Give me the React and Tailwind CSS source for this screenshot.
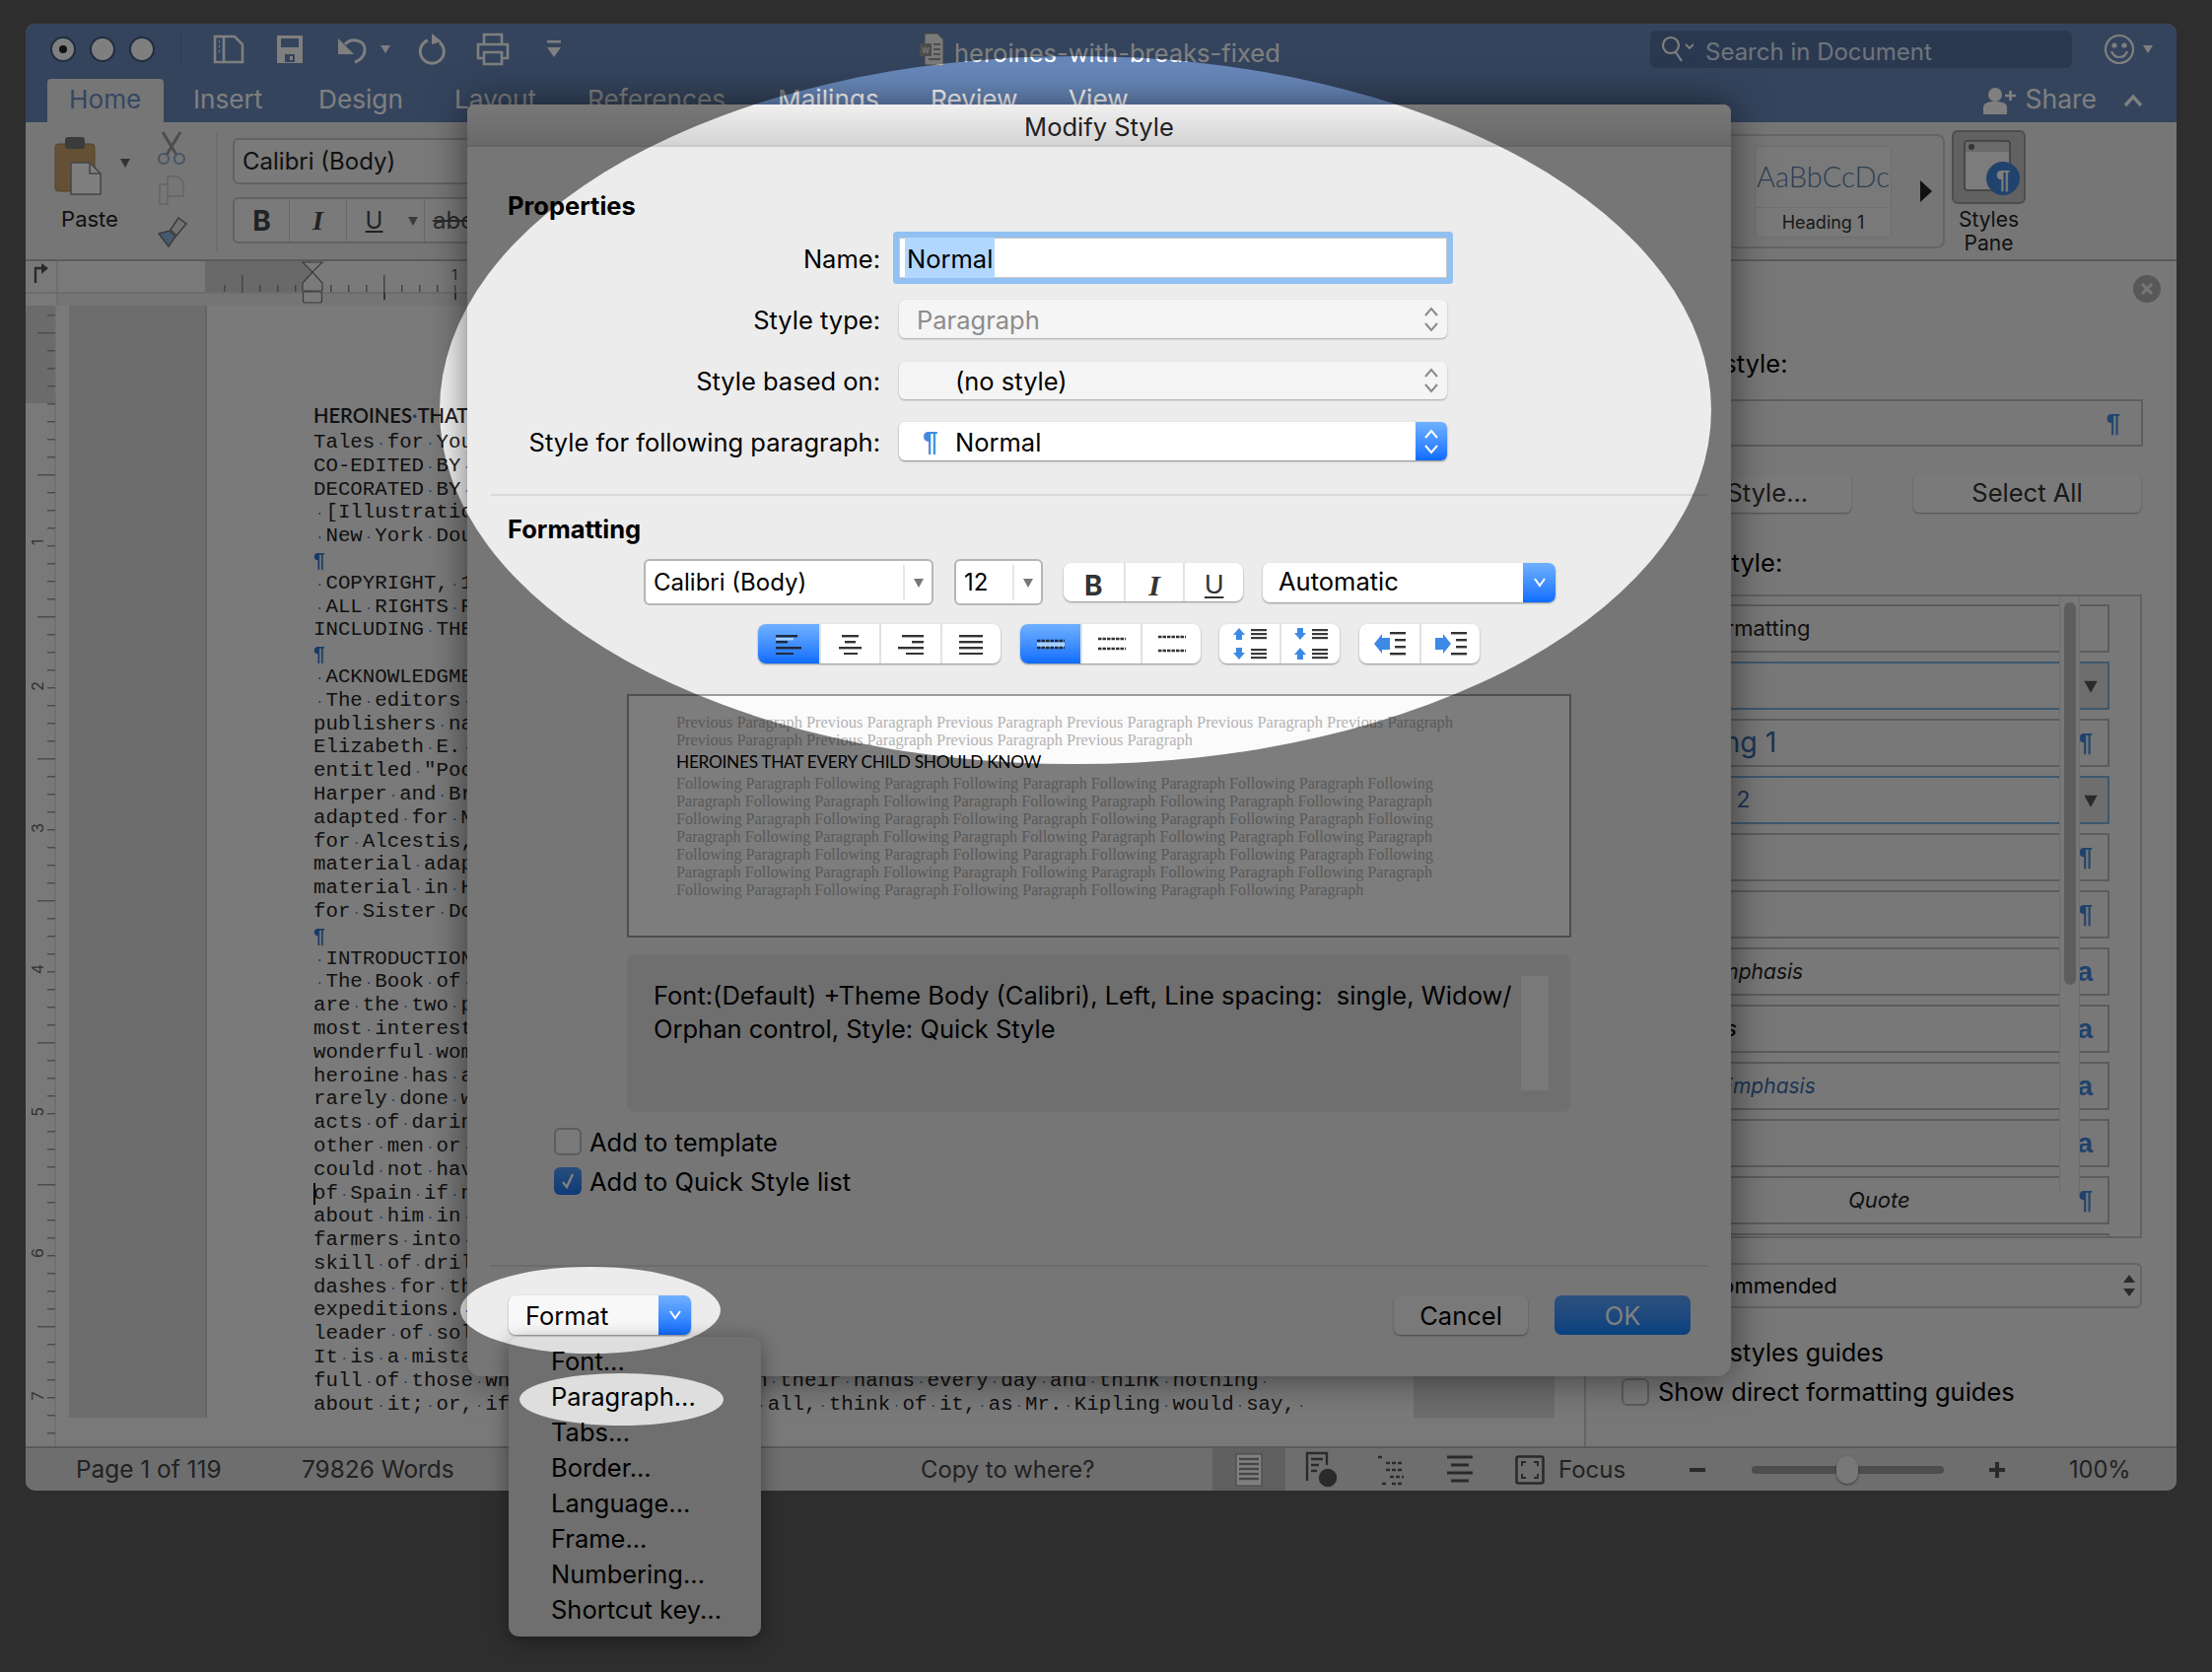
const docLines = [
  "Tales for Young People of the World's Heroines of All Ages",
  "CO-EDITED BY HAMILTON WRIGHT MABIE AND KATE STEPHENS",
  "DECORATED BY BLANCHE OSTERTAG",
  " [Illustration]",
  " New York Doubleday, Page & Company",
  "¶",
  " COPYRIGHT, 1908, BY DOUBLEDAY, PAGE & COMPANY",
  " ALL RIGHTS RESERVED, INCLUDING THAT OF TRANSLATION",
  "INCLUDING THE SCANDINAVIAN",
  "¶",
  " ACKNOWLEDGMENT",
  " The editors and publishers",
  "publishers named below",
  "Elizabeth E. Seelye",
  "entitled \"Pocahontas\"",
  "Harper and Brothers",
  "adapted for Madame",
  "for Alcestis, and",
  "material adapted",
  "material in Hypatia",
  "for Sister Dora",
  "¶",
  " INTRODUCTION",
  " The Book of Heroines",
  "are the two parts",
  "most interesting",
  "wonderful women",
  "heroine has a",
  "rarely done with",
  "acts of daring",
  "other men or women",
  "could not have done",
  "of Spain if not",
  "about him in the",
  "farmers into soldiers",
  "skill of drill",
  "dashes for the enemy",
  "expeditions. He",
  "leader of soldiers",
  "It is a mistake",
  "full of those who hold their lives in their hands every day and think nothing ",
  "about it; or, if they think of it at all, think of it, as Mr. Kipling would say, ",
];

function DocLine({ text, caret }) {
  if (text === "¶") {
    return <div className="h-[23.81px] font-['Liberation_Sans'] font-bold text-[#2f74c8]">¶</div>;
  }
  const parts = text.split(" ");
  return (
    <div className="relative h-[23.81px]">
      {caret && <span className="absolute left-0 top-[1px] h-[22px] w-[2px] bg-black" />}
      {parts.map((p, i) => (
        <span key={i}>
          {i > 0 && <span className="inline-block w-[12.45px] text-center text-[13px] text-[#2f74c8]">·</span>}
          {p}
        </span>
      ))}
    </div>
  );
}

function Chevrons({ color = "#8a8a8a" }) {
  return (
    <svg width="16" height="28" viewBox="0 0 16 28" fill="none" stroke={color} strokeWidth="2">
      <path d="M2 10 L8 3 L14 10" />
      <path d="M2 18 L8 25 L14 18" />
    </svg>
  );
}

function Down({ className, size = 12 }) {
  return (
    <svg className={className} width={size} height={size} viewBox="0 0 12 12" fill="currentColor">
      <path d="M1 2 H11 L6 11 Z" />
    </svg>
  );
}

function BlueDrop({ w }) {
  return (
    <svg width={w} height="12" viewBox="0 0 16 12" fill="none" stroke="#fff" strokeWidth="2">
      <path d="M3 2 L8 9 L13 2" />
    </svg>
  );
}

function Bars({ rows, w = 26, h = 22, color = "#333333", stripe }) {
  return (
    <svg width={w} height={h} viewBox={`0 0 ${w} ${h}`}>
      {rows.map(([x, len, y], i) => (
        <rect key={i} x={x} y={y} width={len} height="2.4" fill={color} />
      ))}
      {stripe && stripe.map(([x, len, y], i) => <rect key={i} x={x} y={y} width={len} height="2.4" fill="#a9d0ff" />)}
    </svg>
  );
}

function Spacing({ top, bottom, color = "#333333", stripe }) {
  return (
    <svg width="30" height="24" viewBox="0 0 30 24">
      {stripe && <rect x="1" y={top + 1.5} width="28" height={bottom - top - 2} fill="#a9d0ff" />}
      <path d={`M1 ${top} H29`} stroke={color} strokeWidth="2.4" strokeDasharray="3.5 1" />
      <path d={`M1 ${bottom} H29`} stroke={color} strokeWidth="2.4" strokeDasharray="3.5 1" />
    </svg>
  );
}

function ParaSp({ flip }) {
  const up = "M7 0 L13 7 H10 V12 H4 V7 H1 Z";
  const dn = "M4 0 H10 V5 H13 L7 12 L1 5 H4 Z";
  return (
    <svg width="36" height="32" viewBox="0 0 36 32">
      <path d={flip ? dn : up} fill="#3d8ae6" />
      <path d={flip ? up : dn} fill="#3d8ae6" transform="translate(0 20)" />
      {[2, 6, 10, 22, 26, 30].map((y) => (
        <rect key={y} x="19" y={y - 1} width="16" height="2.2" fill="#3a3a3a" />
      ))}
    </svg>
  );
}

function Indent({ right }) {
  return (
    <svg width="34" height="26" viewBox="0 0 34 26">
      {right ? (
        <path d="M1 5 H9 V1 L17 11 L9 21 V17 H1 Z" fill="#3d8ae6" transform="translate(0 2)" />
      ) : (
        <path d="M17 5 H9 V1 L1 11 L9 21 V17 H17 Z" fill="#3d8ae6" transform="translate(0 2)" />
      )}
      <rect x="17" y="1" width="16" height="2.4" fill="#333" />
      <rect x="22" y="8" width="11" height="2.4" fill="#333" />
      <rect x="22" y="15" width="11" height="2.4" fill="#333" />
      <rect x="17" y="22" width="16" height="2.4" fill="#333" />
    </svg>
  );
}

function Check({ checked }) {
  return checked ? (
    <span className="flex h-[28px] w-[28px] items-center justify-center rounded-[6px] bg-linear-to-b from-[#4e9bf8] to-[#1d74ee]">
      <svg width="16" height="18" viewBox="0 0 16 18" fill="none" stroke="#fff" strokeWidth="2.4">
        <path d="M3 10 L7 15 L13 2" />
      </svg>
    </span>
  ) : (
    <span className="h-[28px] w-[28px] rounded-[6px] border-2 border-[#b8b8b8] bg-[#f3f3f3]" />
  );
}

function Tab({ className, children }) {
  return <div className={`flex h-[44px] items-center pb-[3px] text-[26.2px] text-white ${className}`}>{children}</div>;
}

function StyleRow({ children, suffix, blue, className = "" }) {
  return (
    <div
      className={`flex h-[49px] w-[488px] shrink-0 items-center justify-between border-2 pl-[10px] ${
        blue ? "border-[#7bb0dd]" : "border-[#b8b8b8]"
      } ${className}`}
    >
      {children}
      {suffix === "drop" && (
        <span className="flex h-full w-[30px] items-center justify-center bg-[#dcdcdc] pr-[4px] text-[#555555]">
          <Down size={16} />
        </span>
      )}
      {suffix === "p" && <span className="mr-[15px] font-['Liberation_Sans'] text-[26px] font-bold text-[#3f86d8]">¶</span>}
      {suffix === "a" && <span className="mr-[15px] font-['Liberation_Sans'] text-[28px] font-bold leading-none text-[#3f86d8]">a</span>}
    </div>
  );
}

function Pilcrow({ className }) {
  return <span className={`font-['Liberation_Sans'] font-bold text-[#3f8be0] ${className}`}>¶</span>;
}

const P6 = "Previous Paragraph Previous Paragraph Previous Paragraph Previous Paragraph Previous Paragraph Previous Paragraph";
const P4 = "Previous Paragraph Previous Paragraph Previous Paragraph Previous Paragraph";
const FA = "Following Paragraph Following Paragraph Following Paragraph Following Paragraph Following Paragraph Following";
const FB = "Paragraph Following Paragraph Following Paragraph Following Paragraph Following Paragraph Following Paragraph";
const FC = "Following Paragraph Following Paragraph Following Paragraph Following Paragraph Following Paragraph";

function Dialog() {
  const seg = "flex items-center justify-center border-l-2 border-[#e2e2e2] first:border-l-0";
  const group = "grid overflow-hidden rounded-[8px] bg-white shadow-[0_1px_2px_rgba(0,0,0,0.4)]";
  const blue = "flex items-center justify-center bg-linear-to-b from-[#6fb0ff] to-[#0a6cff]";
  return (
    <div className="absolute left-[474px] top-[106px] z-10 h-[1290px] w-[1282px] rounded-b-[14px] rounded-t-[8px] bg-[#ececec] text-[25.5px] text-black shadow-[0_0_40px_rgba(0,0,0,0.55)]">
      <div className="flex h-[43px] items-center justify-center rounded-t-[8px] border-b-2 border-[#c9c9c9] bg-linear-to-b from-[#f0f0f0] to-[#d4d4d4] pt-[5px] text-[#222222]">
        Modify Style
      </div>
      <div className="ml-[41px] mt-[44px] h-[32px] font-bold leading-[32px]">Properties</div>

      <div className="mt-[16px] flex h-[41px] items-center">
        <div className="w-[419px] pt-[3px] text-right">Name:</div>
        <div className="ml-[19px] flex h-[41px] w-[556px] items-center rounded-[1px] border border-[#c8c8c8] bg-white pl-[5px] shadow-[0_0_0_6px_#92c0f2]">
          <span className="bg-[#b2d7ff] px-[2px] pt-[3px]">Normal</span>
        </div>
      </div>
      <div className="mt-[22px] flex h-[39px] items-center">
        <div className="w-[419px] pt-[3px] text-right">Style type:</div>
        <div className="ml-[19px] flex h-[39px] w-[556px] items-center justify-between rounded-[6px] bg-[#f5f5f5] pl-[18px] pr-[8px] text-[#8c8c8c] shadow-[0_1px_2px_rgba(0,0,0,0.3)]">
          <span className="pt-[3px]">Paragraph</span> <Chevrons />
        </div>
      </div>
      <div className="mt-[24px] flex h-[38px] items-center">
        <div className="w-[419px] pt-[2px] text-right">Style based on:</div>
        <div className="ml-[19px] flex h-[38px] w-[556px] items-center justify-between rounded-[6px] bg-[#f5f5f5] pl-[57px] pr-[8px] shadow-[0_1px_2px_rgba(0,0,0,0.3)]">
          <span className="pt-[2px]">(no style)</span> <Chevrons />
        </div>
      </div>
      <div className="mt-[23px] flex h-[39px] items-center">
        <div className="w-[419px] pt-[3px] text-right">Style for following paragraph:</div>
        <div className="ml-[19px] flex h-[39px] w-[556px] items-center overflow-hidden rounded-[6px] bg-white pl-[24px] shadow-[0_1px_2px_rgba(0,0,0,0.45)]">
          <Pilcrow className="w-[33px] text-[28px]" />
          <span className="pt-[3px]">Normal</span>
          <span className="ml-auto flex h-full w-[32px] items-center justify-center bg-linear-to-b from-[#6fb0ff] to-[#0a6cff]">
            <Chevrons color="#ffffff" />
          </span>
        </div>
      </div>
      <div className="mx-[24px] mt-[34px] h-[2px] bg-[#d9d9d9]" />
      <div className="ml-[41px] mt-[18px] h-[32px] font-bold leading-[32px]">Formatting</div>

      <div className="ml-[179px] mt-[14px] flex h-[47px] items-center text-[24px]">
        <div className="flex h-[47px] w-[294px] items-center rounded-[6px] border-2 border-[#b5b5b5] bg-white pl-[8px]">
          Calibri (Body)
          <span className="ml-auto flex h-[36px] w-[29px] items-center justify-center border-l-2 border-[#e6e6e6] text-[#777777]">
            <Down />
          </span>
        </div>
        <div className="ml-[21px] flex h-[47px] w-[90px] items-center rounded-[6px] border-2 border-[#b5b5b5] bg-white pl-[8px]">
          12
          <span className="ml-auto flex h-[36px] w-[29px] items-center justify-center border-l-2 border-[#e6e6e6] text-[#777777]">
            <Down />
          </span>
        </div>
        <div className={`${group} ml-[21px] h-[39px] w-[182px] grid-cols-3 text-[#333333]`}>
          <div className={`${seg} text-[28px] font-bold`}>B</div>
          <div className={`${seg} font-['Liberation_Serif'] text-[30px] font-bold italic`}>I</div>
          <div className={`${seg} font-['Liberation_Sans'] text-[27px] underline underline-offset-[3px]`}>U</div>
        </div>
        <div className="ml-[20px] flex h-[40px] w-[297px] items-center overflow-hidden rounded-[7px] bg-white pl-[16px] text-[25.5px] shadow-[0_1px_2px_rgba(0,0,0,0.4)]">
          Automatic
          <span className={`${blue} ml-auto h-full w-[33px]`}>
            <BlueDrop w={18} />
          </span>
        </div>
      </div>

      <div className="ml-[295px] mt-[19px] flex h-[40px]">
        <div className={`${group} h-[40px] w-[246px] grid-cols-4`}>
          <div className={blue}>
            <Bars rows={[[0, 22, 2], [0, 12, 8], [0, 26, 14], [0, 18, 20]]} stripe={[[0, 18, 5]]} color="#1f2a3a" />
          </div>
          <div className={seg}><Bars rows={[[5, 17, 2], [8, 11, 8], [2, 23, 14], [7, 14, 20]]} /></div>
          <div className={seg}><Bars rows={[[4, 22, 2], [14, 12, 8], [0, 26, 14], [8, 18, 20]]} /></div>
          <div className={seg}><Bars rows={[[1, 24, 2], [1, 24, 8], [1, 24, 14], [1, 24, 20]]} /></div>
        </div>
        <div className={`${group} ml-[20px] h-[40px] w-[183px] grid-cols-3`}>
          <div className={blue}><Spacing top={9} bottom={16} color="#1f2a3a" stripe /></div>
          <div className={seg}><Spacing top={7} bottom={17} /></div>
          <div className={seg}><Spacing top={5} bottom={19} /></div>
        </div>
        <div className={`${group} ml-[19px] h-[40px] w-[122px] grid-cols-2`}>
          <div className={seg}><ParaSp /></div>
          <div className={seg}><ParaSp flip /></div>
        </div>
        <div className={`${group} ml-[20px] h-[40px] w-[122px] grid-cols-2`}>
          <div className={seg}><Indent /></div>
          <div className={seg}><Indent right /></div>
        </div>
      </div>

      <div className="ml-[162px] mt-[31px] h-[247px] w-[958px] border-2 border-[#9c9c9c] bg-[#fbfbfb] pl-[48px] pt-[18px] font-['Liberation_Serif'] text-[16.2px] leading-[18px] whitespace-nowrap text-[#b3b3b3]">
        <div className="text-[16.4px]">{P6}</div>
        <div className="text-[16.4px]">{P4}</div>
        <div className="font-['Lato'] text-[17.3px] leading-[26px] tracking-[-0.3px] text-black">HEROINES THAT EVERY CHILD SHOULD KNOW</div>
        <div>{FA}</div>
        <div>{FB}</div>
        <div>{FA}</div>
        <div>{FB}</div>
        <div>{FA}</div>
        <div>{FB}</div>
        <div>{FC}</div>
      </div>

      <div className="ml-[162px] mt-[17px] flex h-[160px] w-[957px] justify-between rounded-[8px] bg-[#dfdfdf] pl-[27px] pr-[22px] pt-[25px] leading-[34px]">
        <div className="whitespace-nowrap">
          Font:(Default) +Theme Body (Calibri), Left, Line spacing:&nbsp; single, Widow/
          <br />
          Orphan control, Style: Quick Style
        </div>
        <div className="-mt-[3px] h-[116px] w-[28px] bg-[#f2f2f2]" />
      </div>

      <div className="ml-[88px] mt-[16px] flex h-[28px] items-center gap-[8px]">
        <Check /> <span className="pt-[3px]">Add to template</span>
      </div>
      <div className="ml-[88px] mt-[12px] flex h-[28px] items-center gap-[8px]">
        <Check checked /> <span className="pt-[3px]">Add to Quick Style list</span>
      </div>
      <div className="mx-[23px] mt-[71px] h-[2px] bg-[#d9d9d9]" />
      <div className="mt-[29px] flex h-[41px] items-start pl-[42px] pr-[41px]">
        <div className="flex h-[40px] w-[185px] items-center overflow-hidden rounded-[7px] bg-[#f8f8f8] pl-[17px] shadow-[0_1px_2px_rgba(0,0,0,0.4)]">
          <span className="pt-[3px]">Format</span>
          <span className={`${blue} ml-auto h-full w-[33px]`}>
            <BlueDrop w={16} />
          </span>
        </div>
        <div className="ml-auto flex h-[40px] w-[136px] items-center justify-center rounded-[7px] bg-[#f2f2f2] pt-[3px] shadow-[0_1px_2px_rgba(0,0,0,0.4)]">Cancel</div>
        <div className="ml-[27px] flex h-[40px] w-[138px] items-center justify-center rounded-[7px] bg-linear-to-b from-[#5aa2f8] to-[#0a82ff] pt-[3px] text-white">OK</div>
      </div>
    </div>
  );
}

function FormatMenu() {
  return (
    <div className="absolute left-[516px] top-[1356px] z-20 h-[304px] w-[256px] rounded-[10px] bg-[#dedede] pl-[43px] pt-[7px] text-[25.5px] leading-[36px] text-black shadow-[0_4px_20px_rgba(0,0,0,0.4)]">
      {["Font...", "Paragraph...", "Tabs...", "Border...", "Language...", "Frame...", "Numbering...", "Shortcut key..."].map((t) => (
        <div key={t} className="h-[36px]">{t}</div>
      ))}
    </div>
  );
}

function HRuler() {
  const ticks = [];
  for (let x = 227; x <= 480; x += 18) ticks.push(x);
  return (
    <svg width="1581" height="45" viewBox="26 265 1581 45" className="block shrink-0">
      <rect x="26" y="265" width="1581" height="32" fill="#f4f4f4" />
      <rect x="26" y="297" width="1581" height="13" fill="#ebebeb" />
      <rect x="26" y="265" width="31" height="45" fill="#f2f2f2" />
      <rect x="57" y="265" width="2" height="45" fill="#dddddd" />
      <rect x="208" y="265" width="109" height="32" fill="#d2d2d2" />
      <rect x="26" y="296" width="1581" height="2" fill="#d8d8d8" />
      <path d="M36 287 V272 H43" fill="none" stroke="#555555" strokeWidth="2.4" />
      <path d="M42 267 L49 272 L42 278 Z" fill="#555555" />
      {ticks.map((x) =>
        x === 317 ? null : (
          <rect key={x} x={x} y={(x - 245) % 144 === 0 ? 279 : 289} width="1.5" height={(x - 245) % 144 === 0 ? 18 : 7} fill="#888888" />
        )
      )}
      <rect x="389" y="297" width="2" height="7" fill="#666666" />
      <rect x="461" y="297" width="2" height="7" fill="#666666" />
      <text x="461" y="284" fontFamily="Inter" fontSize="15" fill="#555555" textAnchor="middle">1</text>
      <path d="M307 266 H327 L317 276 Z M317 276 L307 287 V295 H327 V287 Z" fill="#f4f4f4" stroke="#777777" strokeWidth="1.2" />
      <rect x="307.5" y="296" width="19" height="11" rx="2" fill="#f4f4f4" stroke="#777777" strokeWidth="1.2" />
    </svg>
  );
}

function VRuler() {
  const ticks = [];
  for (let y = 319; y < 1460; y += 18) ticks.push(y);
  const nums = [[1, 550], [2, 696], [3, 840], [4, 983], [5, 1128], [6, 1271], [7, 1416]];
  return (
    <svg width="31" height="1157" viewBox="26 310 31 1157" className="block shrink-0">
      <rect x="26" y="310" width="31" height="1157" fill="#f2f2f2" />
      <rect x="26" y="310" width="31" height="99" fill="#d6d6d6" />
      <rect x="55" y="310" width="2" height="1157" fill="#e0e0e0" />
      {ticks.map((y) => {
        const long = (y - 337) % 144 === 0;
        return <rect key={y} x={long ? 38 : 48} y={y} width={long ? 18 : 8} height="1.5" fill="#999999" />;
      })}
      {nums.map(([n, y]) => (
        <text key={n} x="0" y="0" fontFamily="Inter" fontSize="16" fill="#666666" textAnchor="middle" transform={`translate(44 ${y}) rotate(-90)`}>
          {n}
        </text>
      ))}
    </svg>
  );
}

function StylesPane() {
  return (
    <div className="flex h-full w-[601px] shrink-0 flex-col border-l-2 border-[#c8c8c8] bg-[#f0f0f0] pl-[33px] text-[25.5px] text-black">
      <div className="ml-[522px] mt-[14px] flex h-[28px] w-[28px] items-center justify-center rounded-full bg-[#b0b0b0]">
        <svg width="14" height="14" viewBox="0 0 14 14" stroke="#eeeeee" strokeWidth="3"><path d="M2 2 L12 12 M12 2 L2 12" /></svg>
      </div>
      <div className="ml-[8px] mt-[46px] h-[32px] leading-[32px]">Current style:</div>
      <div className="mt-[20px] flex h-[48px] w-[532px] items-center justify-end border-2 border-[#bcbcbc] pr-[21px]">
        <Pilcrow className="text-[26px]" />
      </div>
      <div className="mt-[28px] flex h-[39px] w-[530px] justify-between text-[25.5px] text-[#333333]">
        <div className="flex h-[39px] w-[236px] items-center justify-center rounded-[6px] bg-[#f5f5f5] pl-[4px] shadow-[0_1px_2px_rgba(0,0,0,0.35)]">New Style...</div>
        <div className="flex h-[39px] w-[231px] items-center justify-center rounded-[6px] bg-[#f5f5f5] shadow-[0_1px_2px_rgba(0,0,0,0.35)]">Select All</div>
      </div>
      <div className="ml-[3px] mt-[35px] h-[32px] leading-[32px]">Apply a style:</div>
      <div className="relative mt-[16px] flex h-[653px] w-[531px] flex-col gap-[9px] overflow-hidden border-2 border-[#c2c2c2] pl-[8px] pt-[8px] text-[22px] text-[#222222]">
        <StyleRow>Clear Formatting</StyleRow>
        <StyleRow blue suffix="drop">Normal</StyleRow>
        <StyleRow suffix="p"><span className="ml-[6px] text-[28.5px] text-[#3a6aa8]">Heading 1</span></StyleRow>
        <StyleRow blue suffix="drop"><span className="text-[23px] text-[#3a6aa8]">Heading 2</span></StyleRow>
        <StyleRow suffix="p"><span className="text-[24px]">Title</span></StyleRow>
        <StyleRow suffix="p"><span className="ml-[12px] text-[22px]">Subtitle</span></StyleRow>
        <StyleRow suffix="a"><span className="text-[21px] italic">Subtle Emphasis</span></StyleRow>
        <StyleRow suffix="a"><span className="text-[21px] italic font-medium text-black">Emphasis</span></StyleRow>
        <StyleRow suffix="a"><span className="ml-[3px] text-[21px] italic text-[#3a6aa8]">Intense Emphasis</span></StyleRow>
        <StyleRow suffix="a"><span className="font-bold">Strong</span></StyleRow>
        <StyleRow suffix="p"><span className="ml-[211px] italic">Quote</span></StyleRow>
        <StyleRow> </StyleRow>
        <div className="absolute left-[445px] top-0 h-[606px] w-[21px] border-x border-[#dcdcdc] bg-[#f0f0f0]">
          <div className="ml-[4px] mt-[6px] h-[388px] w-[12px] rounded-full bg-[#bdbdbd]" />
        </div>
      </div>
      <div className="mt-[25px] flex h-[46px] w-[531px] items-center justify-between rounded-[6px] border-2 border-[#c8c8c8] pl-[14px] pr-[4px] text-[22px]">
        List: Recommended
        <svg width="14" height="26" viewBox="0 0 14 26" fill="#555555"><path d="M1 10 L7 2 L13 10 Z M1 16 L7 24 L13 16 Z" /></svg>
      </div>
      <div className="ml-[3px] mt-[31px] flex h-[30px] items-center gap-[9px] text-[25px]">
        <Check /> Show styles guides
      </div>
      <div className="ml-[3px] mt-[10px] flex h-[28px] items-center gap-[9px]">
        <Check /> Show direct formatting guides
      </div>
    </div>
  );
}

function Ribbon() {
  return (
    <div className="flex h-[141px] items-start border-b-2 border-[#b6b6b6] bg-[#ececec]">
      <div className="ml-[20px] mt-[14px] flex w-[90px] shrink-0 flex-col items-center">
        <svg width="90" height="60" viewBox="0 0 90 60">
          <rect x="10" y="8" width="40" height="48" rx="3" fill="#c8a36a" stroke="#a58650" />
          <rect x="20" y="1" width="20" height="12" rx="3" fill="#777777" />
          <path d="M26 27 H45 L56 38 V59 H26 Z" fill="#ffffff" stroke="#8a8a8a" strokeWidth="1.5" />
          <path d="M45 27 V38 H56" fill="none" stroke="#8a8a8a" strokeWidth="1.5" />
          <path d="M76 23 H86 L81 32 Z" fill="#666666" />
        </svg>
        <div className="mt-[7px] text-[22px] leading-[34px] text-[#222222]">Paste</div>
      </div>
      <div className="mt-[9px] flex w-[76px] shrink-0 flex-col items-center gap-[10px]">
        <svg width="30" height="34" viewBox="0 0 30 34" fill="none" stroke="#9a9a9a" strokeWidth="3">
          <path d="M6 1 L20 24 M24 1 L10 24" />
          <circle cx="7" cy="28" r="5" stroke="#8aa8c8" strokeWidth="2" />
          <circle cx="23" cy="28" r="5" stroke="#8aa8c8" strokeWidth="2" />
        </svg>
        <svg width="28" height="32" viewBox="0 0 28 32" fill="none" stroke="#d2d2d2" strokeWidth="2">
          <path d="M10 2 H20 L26 8 V22 H10 Z" />
          <path d="M2 10 H10 V30 H2 Z" />
        </svg>
        <svg width="34" height="32" viewBox="0 0 34 32">
          <path d="M24 2 L32 8 L22 20 L16 14 Z" fill="#e2e2e2" stroke="#777777" strokeWidth="1.5" />
          <path d="M4 18 L15 15 L21 21 L14 31 Z" fill="#8ab2de" stroke="#777777" strokeWidth="1.5" />
        </svg>
      </div>
      <div className="ml-[7px] mt-[9px] h-[122px] w-[2px] shrink-0 bg-[#dcdcdc]" />
      <div className="ml-[15px] mt-[16px] flex w-[300px] shrink-0 flex-col gap-[13px] text-[24px] text-[#222222]">
        <div className="flex h-[47px] w-[300px] items-center rounded-[6px] border-2 border-[#c4c4c4] bg-[#f4f4f4] pl-[8px]">
          Calibri (Body)
          <span className="ml-auto flex h-[36px] w-[30px] items-center justify-center border-l border-[#d0d0d0] text-[#666666]"><Down /></span>
        </div>
        <div className="flex h-[47px] w-[300px] items-center rounded-[6px] border-2 border-[#c4c4c4] bg-[#f4f4f4]">
          <span className="flex h-full w-[56px] items-center justify-center border-r border-[#d0d0d0] text-[28px] font-bold text-[#444444]">B</span>
          <span className="flex h-full w-[58px] items-center justify-center border-r border-[#d0d0d0] font-['Liberation_Serif'] text-[28px] italic font-bold text-[#444444]">I</span>
          <span className="flex h-full w-[55px] items-center justify-center underline text-[#444444]">U</span>
          <span className="flex h-full w-[24px] items-center justify-center border-r border-[#d0d0d0] text-[#777777]"><Down /></span>
          <span className="ml-[8px] line-through text-[#555555]">abc</span>
        </div>
      </div>
      <div className="ml-auto mr-[153px] mt-[8px] flex items-start">
        <div className="mt-[4px] flex h-[116px] w-[300px] items-center rounded-[8px] border-2 border-[#c8c8c8] pl-[105px]">
          <div className="flex h-[93px] w-[139px] flex-col overflow-hidden rounded-[4px] border border-[#dadada] bg-[#f2f2f2]">
            <div className="flex h-[61px] items-center justify-center whitespace-nowrap font-['Lato'] text-[29px] font-light text-[#5a7ba8]">AaBbCcDc</div>
            <div className="flex flex-1 items-center justify-center border-t border-[#e0e0e0] text-[18px] text-[#333333]">Heading 1</div>
          </div>
          <svg className="ml-[28px]" width="14" height="24" viewBox="0 0 14 24" fill="#222222"><path d="M1 1 L13 12 L1 23 Z" /></svg>
        </div>
        <div className="ml-[7px] flex w-[75px] flex-col items-center">
          <div className="flex h-[75px] w-[75px] items-center justify-center rounded-[6px] border-2 border-[#9c9c9c] bg-[#c2c2c2]">
            <svg width="62" height="56" viewBox="0 0 62 56">
              <rect x="6" y="1" width="46" height="50" rx="3" fill="#f8f8f8" stroke="#777777" strokeWidth="1.5" />
              <rect x="7" y="2" width="44" height="10" fill="#d4d4d4" />
              <circle cx="13" cy="7" r="3" fill="#666666" />
              <circle cx="45" cy="39" r="17" fill="#3f86d8" />
              <text x="45" y="49" textAnchor="middle" fontFamily="Liberation Sans" fontWeight="700" fontSize="26" fill="#ffffff">¶</text>
            </svg>
          </div>
          <div className="mt-[4px] text-center text-[21px] leading-[24px] text-[#222222]">Styles<br />Pane</div>
        </div>
      </div>
    </div>
  );
}

function TitleBar() {
  return (
    <div className="flex h-[52px] items-center pl-[25px] pr-[24px] text-white">
      <div className="flex gap-[14px]">
        <span className="flex h-[26px] w-[26px] items-center justify-center rounded-full border-2 border-[#3e5a80] bg-white">
          <span className="h-[8px] w-[8px] rounded-full bg-[#222222]" />
        </span>
        <span className="h-[26px] w-[26px] rounded-full border-2 border-[#3e5a80] bg-white" />
        <span className="h-[26px] w-[26px] rounded-full border-2 border-[#3e5a80] bg-white" />
      </div>
      <span className="ml-[26px] h-[32px] w-[1px] bg-[#5a7aa8]" />
      <svg className="ml-[32px]" width="32" height="30" viewBox="0 0 32 30" fill="none" stroke="#fff" strokeWidth="2.6">
        <path d="M2 2 H22 L30 10 V28 H2 Z" /><path d="M11 2 V28" /><path d="M6 7 H7 M6 12 H7 M6 17 H7" />
      </svg>
      <svg className="ml-[31px]" width="30" height="30" viewBox="0 0 30 30" fill="#fff">
        <path d="M2 1 H28 V29 H2 Z M6 4 V13 H24 V4 Z M10 20 V28 H20 V20 Z" fillRule="evenodd" />
        <rect x="15" y="22" width="3" height="4" />
      </svg>
      <svg className="ml-[31px]" width="34" height="32" viewBox="0 0 34 32" fill="none" stroke="#fff" strokeWidth="3">
        <path d="M3 5 V21 H19 Z" fill="#fff" stroke="none" />
        <path d="M10 11 C16 4 31 6 30 17 C30 23 25 27 20 29" />
      </svg>
      <svg className="ml-[12px]" width="10" height="10" viewBox="0 0 10 10" fill="#fff"><path d="M0 1 H10 L5 9 Z" /></svg>
      <svg className="ml-[28px]" width="28" height="34" viewBox="0 0 28 34" fill="none" stroke="#fff" strokeWidth="3">
        <path d="M10 8 A12 12 0 1 0 22 10" />
        <path d="M14 1 L24 9 L14 12 Z" fill="#fff" stroke="none" />
      </svg>
      <svg className="ml-[31px]" width="34" height="34" viewBox="0 0 34 34" fill="none" stroke="#fff" strokeWidth="2.6">
        <path d="M8 12 V2 H26 V12" /><path d="M8 26 H2 V12 H32 V26 H26" /><path d="M8 20 H26 V32 H8 Z" />
      </svg>
      <svg className="ml-[37px]" width="16" height="20" viewBox="0 0 16 20" fill="#fff">
        <rect x="1" y="1" width="14" height="2.5" /><path d="M1 8 H15 L8 18 Z" />
      </svg>
      <svg className="ml-[363px]" width="26" height="34" viewBox="0 0 26 34">
        <path d="M5 1 H18 L24 7 V33 H5 Z" fill="#f4f4f4" stroke="#888888" />
        <path d="M14 12 H21 M14 17 H21 M14 22 H21 M9 27 H21" stroke="#999999" strokeWidth="2" />
        <rect x="0" y="11" width="12" height="13" fill="#9a9a9a" />
        <text x="6" y="21" fontFamily="Liberation Sans" fontSize="10" fill="#fff" textAnchor="middle">w</text>
      </svg>
      <span className="ml-[9px] pt-[8px] text-[25.5px] text-white">heroines-with-breaks-fixed</span>
      <div className="ml-auto flex h-[38px] w-[428px] items-center rounded-[6px] bg-[#5672a0] pl-[10px] text-[24px] text-[#dde8f8]">
        <svg width="34" height="28" viewBox="0 0 34 28" fill="none" stroke="#fff" strokeWidth="2.2">
          <circle cx="11" cy="10" r="8" /><path d="M16 17 L22 26" /><path d="M26 9 L30 13 L34 9" strokeWidth="1.8" />
        </svg>
        <span className="ml-[12px] pt-[5px]">Search in Document</span>
      </div>
      <svg className="ml-[32px]" width="32" height="32" viewBox="0 0 32 32" fill="none" stroke="#fff" strokeWidth="2.2">
        <circle cx="16" cy="16" r="14" /><path d="M8 18 C11 26 21 26 24 18" /><circle cx="11" cy="12" r="1.5" fill="#fff" /><circle cx="21" cy="12" r="1.5" fill="#fff" />
      </svg>
      <svg className="ml-[8px]" width="10" height="10" viewBox="0 0 10 10" fill="#fff"><path d="M0 1 H10 L5 9 Z" /></svg>
    </div>
  );
}

function TabRow() {
  return (
    <div className="flex h-[48px] items-end pl-[22px] pr-[34px]">
      <Tab className="w-[118px] rounded-t-[4px] bg-[#ececec] pl-[22px] !text-[#6b8fc4]">Home</Tab>
      <Tab className="ml-[30px] w-[127px]">Insert</Tab>
      <Tab className="w-[138px]">Design</Tab>
      <Tab className="w-[135px]">Layout</Tab>
      <Tab className="w-[193px]">References</Tab>
      <Tab className="w-[155px]">Mailings</Tab>
      <Tab className="w-[140px]">Review</Tab>
      <Tab className="w-[100px]">View</Tab>
      <div className="ml-auto flex h-[44px] items-center text-[26.5px] text-white">
        <svg width="34" height="28" viewBox="0 0 34 28" fill="#fff">
          <circle cx="12" cy="8" r="7" /><path d="M0 28 V21 C0 16 6 15 12 15 C18 15 24 16 24 21 V28 Z" /><path d="M22 9 H33 M27.5 4 V14" stroke="#fff" strokeWidth="2.6" />
        </svg>
        <span className="ml-[8px] pb-[3px]">Share</span>
        <svg className="ml-[27px]" width="20" height="14" viewBox="0 0 20 14" fill="none" stroke="#fff" strokeWidth="3.4"><path d="M2 12 L10 3 L18 12" /></svg>
      </div>
    </div>
  );
}

function StatusBar() {
  return (
    <div className="flex h-[45px] shrink-0 items-center border-t-2 border-[#b4b4b4] bg-[#dcdcdc] pl-[51px] text-[24.4px] text-[#444444]">
      <span className="w-[229px]">Page 1 of 119</span>
      <span className="w-[628px]">79826 Words</span>
      <span className="w-[296px] text-[23.8px]">Copy to where?</span>
      <span className="flex h-full w-[74px] items-center justify-center bg-[#c0c0c0]">
        <svg width="28" height="34" viewBox="0 0 28 34" fill="#fff" stroke="#8a8a8a">
          <rect x="1" y="1" width="26" height="32" />
          {[6, 11, 16, 21, 26].map((y) => <path key={y} d={`M4 ${y} H24`} strokeWidth="2.4" />)}
        </svg>
      </span>
      <svg className="ml-[20px]" width="32" height="38" viewBox="0 0 32 38" fill="none" stroke="#555555" strokeWidth="2.4">
        <path d="M2 30 V2 H22 V14 M6 8 H18 M6 14 H14 M6 20 H12" />
        <circle cx="23" cy="27" r="8" fill="#555555" />
      </svg>
      <svg className="ml-[40px]" width="30" height="32" viewBox="0 0 30 32" stroke="#555555" strokeWidth="2.4">
        <path d="M2 3 H7 M10 9 H28 M10 16 H28 M14 23 H28 M6 30 H12 M16 30 H28" strokeDasharray="4 2" />
      </svg>
      <svg className="ml-[40px]" width="30" height="32" viewBox="0 0 30 32" stroke="#555555" strokeWidth="2.8">
        <path d="M2 3 H28 M6 11 H24 M2 19 H28 M6 27 H24" />
      </svg>
      <svg className="ml-[41px]" width="30" height="30" viewBox="0 0 30 30" fill="none" stroke="#555555" strokeWidth="2.6">
        <rect x="1.5" y="1.5" width="27" height="27" rx="2" /><path d="M7 11 V7 H11 M19 7 H23 V11 M7 19 V23 H11 M23 19 V23 H19" strokeWidth="2" />
      </svg>
      <span className="ml-[14px] w-[133px] text-[24px]">Focus</span>
      <span className="h-[4px] w-[16px] bg-[#555555]" />
      <span className="relative ml-[47px] h-[8px] w-[195px] rounded-full bg-[#9a9a9a]">
        <span className="absolute left-[86px] top-[-10px] h-[28px] w-[22px] rounded-full bg-[#f0f0f0] shadow-[0_1px_2px_rgba(0,0,0,0.5)]" />
      </span>
      <svg className="ml-[46px]" width="16" height="16" viewBox="0 0 16 16" stroke="#555555" strokeWidth="4"><path d="M0 8 H16 M8 0 V16" /></svg>
      <span className="ml-[65px] text-[23.6px]">100%</span>
    </div>
  );
}

export default function App() {
  return (
    <div className="relative h-[1696px] w-[2244px] overflow-hidden bg-[#5c5c5c] pl-[26px] pt-[24px] font-['Inter',sans-serif]">
      <div className="flex h-[1488px] w-[2182px] flex-col overflow-hidden rounded-[10px] bg-[#ececec]">
        <div className="h-[100px] shrink-0 bg-[#6888ba]">
          <TitleBar />
          <TabRow />
        </div>
        <Ribbon />
        <div className="flex min-h-0 flex-1">
          <div className="flex w-[1581px] shrink-0 flex-col">
            <HRuler />
            <div className="flex min-h-0 flex-1">
              <VRuler />
              <div className="flex-1 bg-[#f2f2f2] pb-[29px] pl-[13px] pr-[30px]">
                <div className="flex h-full">
                  <div className="w-[138px] shrink-0 bg-[#d9d9d9]" />
                  <div className="flex-1 overflow-hidden border-l-2 border-[#c8c8c8] bg-[#f5f5f5] pl-[108px] pt-[100px] font-['Liberation_Mono'] text-[20.75px] leading-[23.81px] whitespace-pre text-[#222222]">
                    <div className="h-[27px] font-['Lato'] text-[20.2px] font-semibold">
                      HEROINES<span className="text-[#2f74c8]">·</span>THAT EVERY CHILD SHOULD KNOW
                    </div>
                    {docLines.map((t, i) => (
                      <DocLine key={i} text={t} caret={t.startsWith("of Spain")} />
                    ))}
                  </div>
                  <div className="w-[143px] shrink-0 bg-[#d9d9d9]" />
                </div>
              </div>
            </div>
          </div>
          <StylesPane />
        </div>
        <StatusBar />
      </div>
      <Dialog />
      <FormatMenu />
      <svg className="pointer-events-none absolute left-0 top-0 z-30" width="2244" height="1696" viewBox="0 0 2244 1696">
        <path
          fillRule="evenodd"
          fill="rgba(0,0,0,0.5)"
          d="M0 0 H2244 V1696 H0 Z
             M446 416 a645 359 0 1 0 1290 0 a645 359 0 1 0 -1290 0 Z
             M467 1329 a132 44 0 1 0 264 0 a132 44 0 1 0 -264 0 Z
             M527 1419.5 a103.5 26.5 0 1 0 207 0 a103.5 26.5 0 1 0 -207 0 Z"
        />
      </svg>
    </div>
  );
}
